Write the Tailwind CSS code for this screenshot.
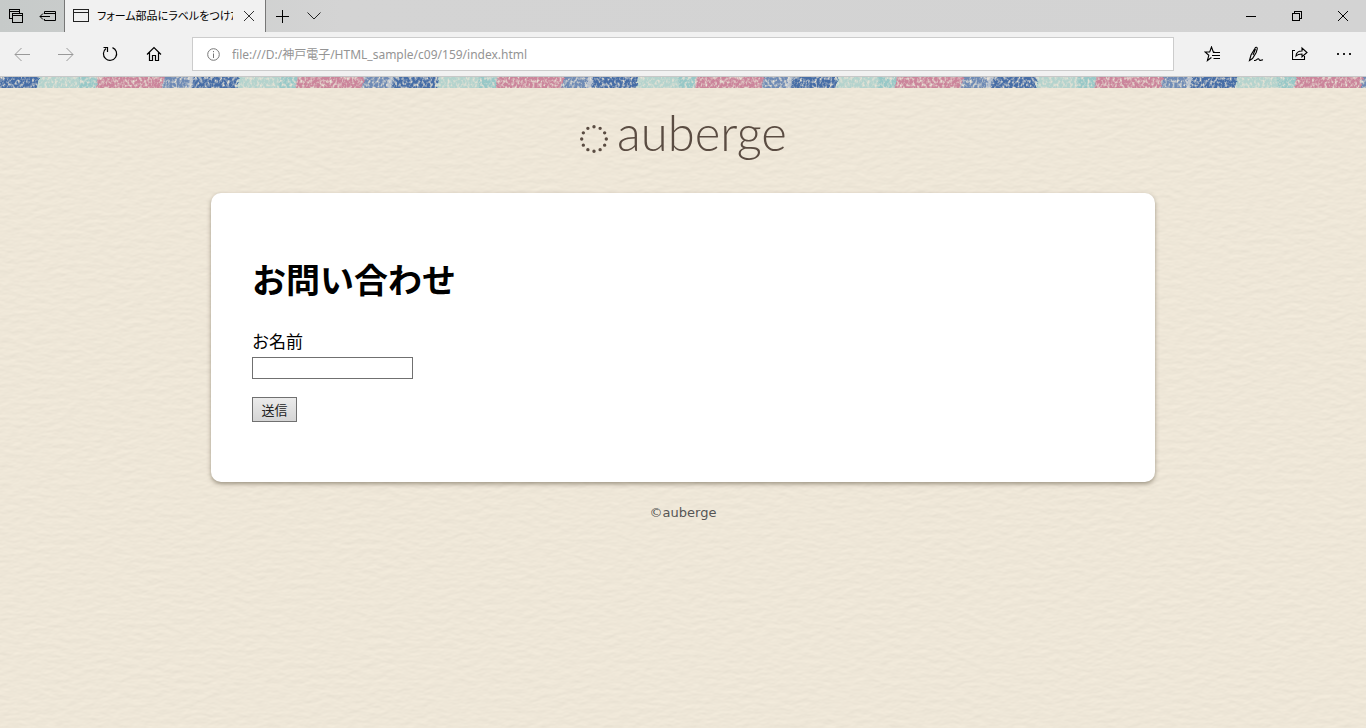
<!DOCTYPE html>
<html lang="ja">
<head>
<meta charset="utf-8">
<meta name="viewport" content="width=device-width, initial-scale=1">
<title>フォーム部品にラベルをつけた</title>
<script src="https://cdn.jsdelivr.net/npm/@tailwindcss/browser@4"></script>
</head>
<body class="flex min-h-screen flex-col bg-[#eee7d8] font-['Noto_Sans','Noto_Sans_CJK_JP',sans-serif] text-black">

<header class="border-b border-[#c8c8c8] bg-[#f1f1f1]">
  <div class="flex h-8 bg-[#d3d3d3] bg-linear-to-r from-[#c6cac9] via-[#d4d4d4] via-25% to-[#d3d3d3]">
    <button aria-label="表示中のタブ" class="flex w-8 items-center justify-center">
      <svg width="16" height="16" viewBox="0 0 16 16" fill="none" stroke="#000" shape-rendering="crispEdges"><path d="M4.500 5.500h10v9h-10zM4.500 7.500h10M4 10.500H1.500v-9h10v4M1.500 3.500h10"/></svg>
    </button>
    <button aria-label="タブを保存" class="flex w-8 items-center justify-center">
      <svg width="18" height="16" viewBox="0 0 18 16" fill="none" stroke="#000"><path d="M5.500 6V3.500h11v9h-11V11M5.500 5.500h11M1 8.500h10M4 5.500l-3 3 3 3"/></svg>
    </button>
    <div class="flex w-[202px] items-center border-x border-[#777] bg-[#f1f1f1]">
      <svg class="ml-2 shrink-0" width="16" height="14" viewBox="0 0 16 14" fill="none" stroke="#222" shape-rendering="crispEdges"><path d="M.5.5h15v12H.5zM.5 3.500h15"/></svg>
      <span class="ml-2 min-w-0 flex-1 overflow-hidden text-[11px] leading-5 whitespace-nowrap [font-feature-settings:'palt']">フォーム部品にラベルをつけた</span>
      <button aria-label="タブを閉じる" class="flex h-8 w-8 shrink-0 items-center justify-center">
        <svg width="10" height="10" viewBox="0 0 10 10" stroke="#333"><path d="M0 0l10 10M10 0L0 10"/></svg>
      </button>
    </div>
    <button aria-label="新しいタブ" class="flex w-8 items-center justify-center">
      <svg width="13" height="13" viewBox="0 0 13 13" stroke="#000"><path d="M0 6.500h13M6.500 0v13"/></svg>
    </button>
    <button aria-label="タブのプレビュー" class="flex w-8 items-center justify-center">
      <svg width="14" height="8" viewBox="0 0 14 8" fill="none" stroke="#222"><path d="M.5.500L7 7 13.500.500"/></svg>
    </button>
    <div class="ml-auto flex">
      <button aria-label="最小化" class="flex w-[46px] items-center justify-center">
        <svg width="10" height="10" viewBox="0 0 10 10" stroke="#000"><path d="M0 5.500h10"/></svg>
      </button>
      <button aria-label="元に戻す" class="flex w-[46px] items-center justify-center">
        <svg width="10" height="10" viewBox="0 0 10 10" fill="none" stroke="#000" shape-rendering="crispEdges"><path d="M.5 2.500h7v7h-7zM2.500 2V.5h7v7H8"/></svg>
      </button>
      <button aria-label="閉じる" class="flex w-[46px] items-center justify-center">
        <svg width="10" height="10" viewBox="0 0 10 10" stroke="#000"><path d="M0 0l10 10M10 0L0 10"/></svg>
      </button>
    </div>
  </div>

  <div class="flex h-11 items-center">
    <button aria-label="戻る" class="flex h-11 w-11 items-center justify-center">
      <svg width="16" height="14" viewBox="0 0 16 14" fill="none" stroke="#999"><path d="M16 7.500H1M7.500 1L1 7.500 7.500 14"/></svg>
    </button>
    <button aria-label="進む" class="flex h-11 w-11 items-center justify-center">
      <svg width="16" height="14" viewBox="0 0 16 14" fill="none" stroke="#999"><path d="M0 7.500h15M8.500 1L15 7.500 8.500 14"/></svg>
    </button>
    <button aria-label="更新" class="flex h-11 w-11 items-center justify-center">
      <svg width="16" height="16" viewBox="0 0 16 16" fill="none" stroke="#000" stroke-width="1.200"><path d="M10.500 1.600A6.600 6.600 0 1 1 4 2.500M1.500 1.500h4V6"/></svg>
    </button>
    <button aria-label="ホーム" class="flex h-11 w-11 items-center justify-center">
      <svg width="16" height="16" viewBox="0 0 16 16" fill="none" stroke="#000" stroke-width="1.200"><path d="M1 8.500l7-7 7 7M3.500 6.500v8h3v-5h3v5h3v-8"/></svg>
    </button>
    <div class="mx-4 flex h-[34px] min-w-0 flex-1 items-center border border-[#ccc] bg-white pl-3.5">
      <svg class="shrink-0" width="13" height="13" viewBox="0 0 13 13" fill="none" stroke="#777"><circle cx="6.500" cy="6.500" r="5.800"/><path d="M6.500 5.500V10M6.500 3v1.200"/></svg>
      <input aria-label="アドレス" type="text" value="file:///D:/神戸電子/HTML_sample/c09/159/index.html" class="ml-3 h-8 min-w-0 flex-1 bg-transparent text-[12px] text-[#949494] outline-none">
    </div>
    <button aria-label="お気に入り" class="flex h-11 w-11 items-center justify-center">
      <svg width="17" height="16" viewBox="0 0 17 16" fill="none" stroke="#000" stroke-width="1.100"><path d="M10.500 6H9.300L7.500 1 5.700 6H1l3.800 3.300-1.400 5.200 4-3M9 6.500h7M8 9.500h8M9.500 12.500H16"/></svg>
    </button>
    <button aria-label="ノートの追加" class="flex h-11 w-11 items-center justify-center">
      <svg width="16" height="16" viewBox="0 0 16 16" fill="none" stroke="#000" stroke-width="1.100"><path d="M1.500 14.500l1.500-5.500L7 2.200C7.700.7 9.500 1 9.300 2.700L8.200 6.500 4.500 12.500l-3 2zM7.500 3L5 9M6 14.500h1c1.500 0 2-2 3.300-1.800 1 .2.700 1.700 1.900 1.700 1 0 1.300-.8 2.800-.4"/></svg>
    </button>
    <button aria-label="共有" class="flex h-11 w-11 items-center justify-center">
      <svg width="16" height="16" viewBox="0 0 16 16" fill="none" stroke="#000" stroke-width="1.100"><path d="M3 4.500H.5v9h12V10M4 10c.2-3.500 2.200-5 6-5V2l5 4.500-5 4.200V8C7.500 8 5.500 8.300 4 10z"/></svg>
    </button>
    <button aria-label="設定など" class="flex h-11 w-11 items-center justify-center">
      <svg width="16" height="4" viewBox="0 0 16 4" fill="#222"><path d="M1 1h2v2H1zM7 1h2v2H7zM13 1h2v2h-2z"/></svg>
    </button>
  </div>
</header>

<div class="relative isolate flex flex-1 flex-col overflow-hidden">
  <!-- paper texture -->
  <svg class="absolute inset-0 -z-10 h-full w-full" aria-hidden="true">
    <filter id="paper" x="0" y="0" width="100%" height="100%" color-interpolation-filters="sRGB">
      <feTurbulence type="fractalNoise" baseFrequency=".09 .2" numOctaves="4" seed="5"/>
      <feColorMatrix values="0 0 0 0 0  0 0 0 0 0  0 0 0 0 0  1 0 0 0 0"/>
      <feDiffuseLighting surfaceScale="0.150" lighting-color="#fff7e7"><feDistantLight azimuth="260" elevation="69"/></feDiffuseLighting>
    </filter>
    <rect width="100%" height="100%" filter="url(#paper)"/>
  </svg>
  <!-- crayon stripe -->
  <svg class="h-[11px] w-full shrink-0" aria-hidden="true">
    <defs>
      <pattern id="crayon" x="-35" width="199.700" height="11" patternUnits="userSpaceOnUse">
        <path fill="#6f8bb5" d="M0 0h31v11H0z"/>
        <path fill="#b5c0cf" d="M24 0h5l-2 11h-5z"/>
        <path fill="#466da6" d="M29 0h45l-2 11H27z"/>
        <path fill="#b4d3cd" d="M74 0h40v11H72z"/>
        <path fill="#98c8c7" d="M114 0h19l-2 11h-17z"/>
        <path fill="#cb859b" d="M133 0h67l-3 11h-66z"/>
        <path fill="#6f8bb5" d="M200 0v11h-3z"/>
      </pattern>
      <filter id="grain" x="0" y="0" width="100%" height="100%" color-interpolation-filters="sRGB">
        <feTurbulence type="fractalNoise" baseFrequency=".4 .3" numOctaves="2" seed="8" result="n"/>
        <feColorMatrix in="n" values="0 0 0 0 .91  0 0 0 0 .89  0 0 0 0 .84  2.600 0 0 0 -1.100" result="spots"/>
        <feDisplacementMap in="SourceGraphic" in2="n" scale="5" xChannelSelector="R" yChannelSelector="R" result="d"/>
        <feMerge><feMergeNode in="SourceGraphic"/><feMergeNode in="d"/><feMergeNode in="spots"/></feMerge>
      </filter>
    </defs>
    <rect width="100%" height="11" fill="url(#crayon)" filter="url(#grain)"/>
  </svg>

  <div class="flex h-[105px] items-start justify-center gap-2 text-[#5a4c42]">
    <svg class="mt-9" width="30" height="30" viewBox="0 0 30 30" fill="none" stroke="currentColor" stroke-width="3.400" stroke-linecap="round" aria-hidden="true"><circle cx="15" cy="15" r="12.300" pathLength="120" stroke-dasharray="0 10"/></svg>
    <span class="mt-5 font-['Lato',sans-serif] text-[49px] leading-none font-light">auberge</span>
  </div>

  <main class="mx-auto w-full max-w-[944px] rounded-[10px] bg-white px-[41px] pt-[62px] pb-[60px] shadow-[0_2px_4px_rgba(80,70,50,0.5)]">
    <h1 class="text-[34px] leading-[50px] font-bold">お問い合わせ</h1>
    <form class="mt-6 flex flex-col items-start">
      <label for="name" class="mb-0.5 text-[17px] leading-[26px]">お名前</label>
      <input id="name" type="text" class="h-[22px] w-[161px] border border-[#707070] bg-white px-1 text-[13px]">
      <button type="submit" class="mt-[18px] h-[25px] w-[45px] border border-[#707070] bg-linear-to-b from-[#ebebeb] to-[#d5d5d5] text-[13px] leading-5 text-[#222]">送信</button>
    </form>
  </main>

  <footer class="mt-5 text-center font-['DejaVu_Sans',sans-serif] text-[13px] leading-[22px] text-[#555]">©auberge</footer>
</div>
</body>
</html>
